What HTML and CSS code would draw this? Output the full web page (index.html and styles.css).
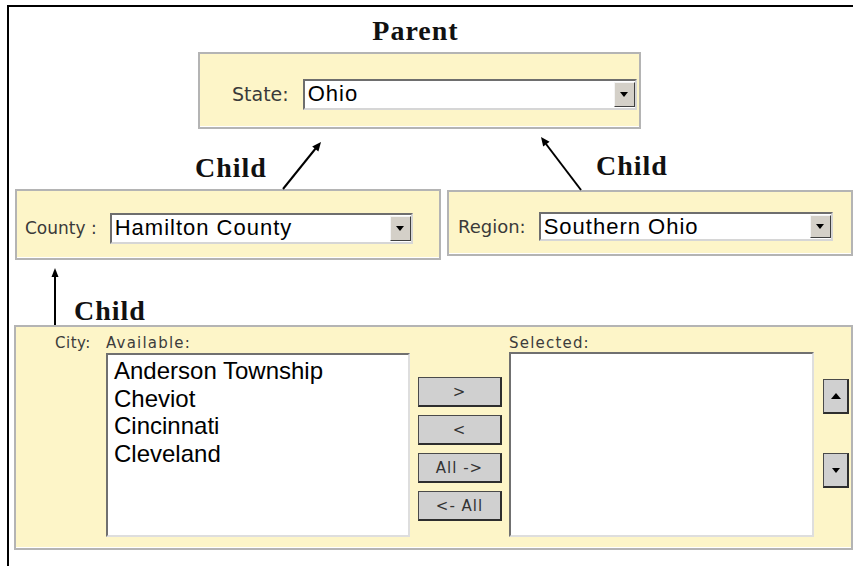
FILE: index.html
```html
<!DOCTYPE html>
<html lang="en">
<head>
    <meta charset="UTF-8">
    <meta name="viewport" content="width=device-width, initial-scale=1.0">
    <title>Cascading Lists</title>
    <link rel="stylesheet" href="styles.css">
</head>
<body>

    <!-- arrows between parent and child lists -->
    <svg class="links" width="853" height="566" viewBox="0 0 853 566">
        <line x1="283" y1="189" x2="316" y2="148" />
        <polygon points="321,142 318.4,151.5 312.2,146.5" />
        <line x1="581" y1="190" x2="546" y2="144" />
        <polygon points="541,137 549.6,141.8 543.2,146.6" />
        <line x1="55" y1="325" x2="55" y2="275" />
        <polygon points="55,268 51.5,277 58.5,277" />
    </svg>

    <div class="frame">

        <div class="parent-area">
            <div class="tag tag-parent">Parent</div>
            <div class="panel panel-state">
                <span class="field-label label-state">State:</span>
                <div class="dropdown dd-state">
                    <span class="dd-text">Ohio</span>
                    <span class="dd-btn"><i class="tri-down"></i></span>
                </div>
            </div>
        </div>

        <div class="link-row">
            <div class="tag tag-county">Child</div>
            <div class="tag tag-region">Child</div>
        </div>

        <div class="child-row">
            <div class="panel panel-county">
                <span class="field-label label-county">County :</span>
                <div class="dropdown dd-county">
                    <span class="dd-text">Hamilton County</span>
                    <span class="dd-btn"><i class="tri-down"></i></span>
                </div>
            </div>
            <div class="panel panel-region">
                <span class="field-label label-region">Region:</span>
                <div class="dropdown dd-region">
                    <span class="dd-text">Southern Ohio</span>
                    <span class="dd-btn"><i class="tri-down"></i></span>
                </div>
            </div>
        </div>

        <div class="city-link">
            <div class="tag">Child</div>
        </div>

        <div class="panel panel-city">
            <div class="small-label city-label">City:</div>

            <div class="list-col col-available">
                <div class="small-label">Available:</div>
                <ul class="listbox">
                    <li>Anderson Township</li>
                    <li>Cheviot</li>
                    <li>Cincinnati</li>
                    <li>Cleveland</li>
                </ul>
            </div>

            <div class="move-btns">
                <button class="btn">&gt;</button>
                <button class="btn">&lt;</button>
                <button class="btn">All -&gt;</button>
                <button class="btn">&lt;- All</button>
            </div>

            <div class="list-col col-selected">
                <div class="small-label">Selected:</div>
                <ul class="listbox"></ul>
            </div>

            <div class="order-btns">
                <button class="btn btn-order"><i class="tri-up"></i></button>
                <button class="btn btn-order"><i class="tri-down"></i></button>
            </div>
        </div>

    </div>

</body>
</html>
```

FILE: styles.css
```css
body {
    margin: 0;
    position: relative;
    background: #fff;
    font-family: "DejaVu Sans", sans-serif;
    color: #3c3c3c;
}
.links {
    position: absolute;
    top: 0;
    left: 0;
    z-index: 2;
    pointer-events: none;
}
.links line {
    stroke: #000;
    stroke-width: 2;
}
.links polygon {
    fill: #000;
}

.frame {
    margin: 5px 0 0 7px;
    min-height: 561px;
    box-sizing: border-box;
    border-top: 2px solid #000;
    border-left: 2px solid #000;
}

.tag {
    font-family: "Liberation Serif", serif;
    font-weight: bold;
    font-size: 28px;
    line-height: 32px;
    letter-spacing: 1px;
    color: #111;
}

/* panels */
.panel {
    box-sizing: border-box;
    background: #fdf5c8;
    border: 2px solid #b4b4b4;
    box-shadow: inset 0 -1px 0 #fff;
    display: flex;
    align-items: center;
}
.field-label {
    color: #3a3a3a;
    white-space: nowrap;
}

/* parent */
.parent-area {
    margin-left: 189px;
    width: 443px;
}
.tag-parent {
    height: 45px;
    box-sizing: border-box;
    padding: 8px 8px 0 0;
    text-align: center;
}
.panel-state {
    height: 77px;
    padding: 25px 0 17px 32px;
    align-items: flex-start;
}
.label-state {
    font-size: 19px;
    line-height: 31px;
    margin-right: 14px;
}

.link-row {
    height: 60px;
    display: flex;
    align-items: flex-start;
}
.tag-county {
    margin: 23px 0 0 186px;
    width: 401px;
}
.tag-region {
    margin-top: 21px;
}

/* children */
.child-row {
    display: flex;
    align-items: flex-start;
    gap: 6px;
    margin-left: 6px;
}
.panel-county {
    width: 426px;
    height: 71px;
    padding: 22px 0 0 8px;
    align-items: flex-start;
}
.label-county {
    font-size: 17px;
    line-height: 31px;
    margin-right: 13px;
}
.panel-region {
    flex: 1;
    margin-top: 1px;
    height: 66px;
    padding: 20px 0 0 9px;
    align-items: flex-start;
}
.label-region {
    font-size: 18px;
    line-height: 29px;
    margin-right: 13px;
}

/* dropdowns */
.dropdown {
    box-sizing: border-box;
    display: flex;
    align-items: stretch;
    background: #fff;
    border: 2px solid;
    border-color: #6e6e6e #d6d6d6 #d6d6d6 #6e6e6e;
    font-family: "Liberation Sans", Arial, sans-serif;
    font-size: 22px;
    letter-spacing: 1px;
    color: #000;
}
.dd-state { width: 334px; height: 31px; }
.dd-county { width: 303px; height: 31px; }
.dd-region { width: 294px; height: 29px; }
.dd-text {
    flex: 1;
    padding-left: 3px;
    line-height: 26px;
    white-space: nowrap;
    overflow: hidden;
}
.dd-btn {
    width: 19px;
    margin: 1px 0 1px;
    background: #d4d0c8;
    border: 1px solid;
    border-color: #f4f4f4 #404040 #404040 #f4f4f4;
    display: flex;
    align-items: center;
    justify-content: center;
}
.tri-down {
    width: 0;
    height: 0;
    border-left: 4px solid transparent;
    border-right: 4px solid transparent;
    border-top: 5px solid #000;
}
.tri-up {
    width: 0;
    height: 0;
    border-left: 5px solid transparent;
    border-right: 5px solid transparent;
    border-bottom: 6px solid #000;
}

/* city */
.city-link {
    height: 65px;
    box-sizing: border-box;
    padding: 35px 0 0 65px;
}
.panel-city {
    margin-left: 5px;
    height: 225px;
    padding: 7px 0 0 39px;
    align-items: flex-start;
}
.small-label {
    font-size: 15px;
    line-height: 18px;
    letter-spacing: 1.2px;
    color: #3c3c3c;
}
.city-label {
    width: 51px;
    letter-spacing: 0.5px;
}
.col-available { width: 304px; }
.col-available .listbox { margin-top: 1px; }
.col-selected {
    width: 305px;
    margin-left: 7px;
}
.col-selected .listbox { height: 185px; }

.listbox {
    box-sizing: border-box;
    height: 184px;
    margin: 0;
    padding: 2px 0 0 6px;
    list-style: none;
    background: #fff;
    border: 2px solid;
    border-color: #707070 #dedede #dedede #707070;
    font-family: "Liberation Sans", Arial, sans-serif;
    font-size: 24px;
    line-height: 27.5px;
    color: #000;
}

.btn {
    box-sizing: border-box;
    margin: 0;
    padding: 0;
    background: #d0d0d0;
    border: 1px solid #4a4a4a;
    border-right: 2px solid #2e2e2e;
    border-bottom: 2px solid #2e2e2e;
    font-family: "DejaVu Sans", sans-serif;
    font-size: 15px;
    letter-spacing: 1px;
    color: #333;
}
.move-btns {
    display: flex;
    flex-direction: column;
    gap: 8px;
    width: 84px;
    margin: 43px 0 0 8px;
}
.move-btns .btn { height: 30px; }
.order-btns {
    display: flex;
    flex-direction: column;
    gap: 39px;
    width: 26px;
    margin: 45px 0 0 9px;
}
.btn-order {
    height: 35px;
    display: flex;
    align-items: center;
    justify-content: center;
}
```
